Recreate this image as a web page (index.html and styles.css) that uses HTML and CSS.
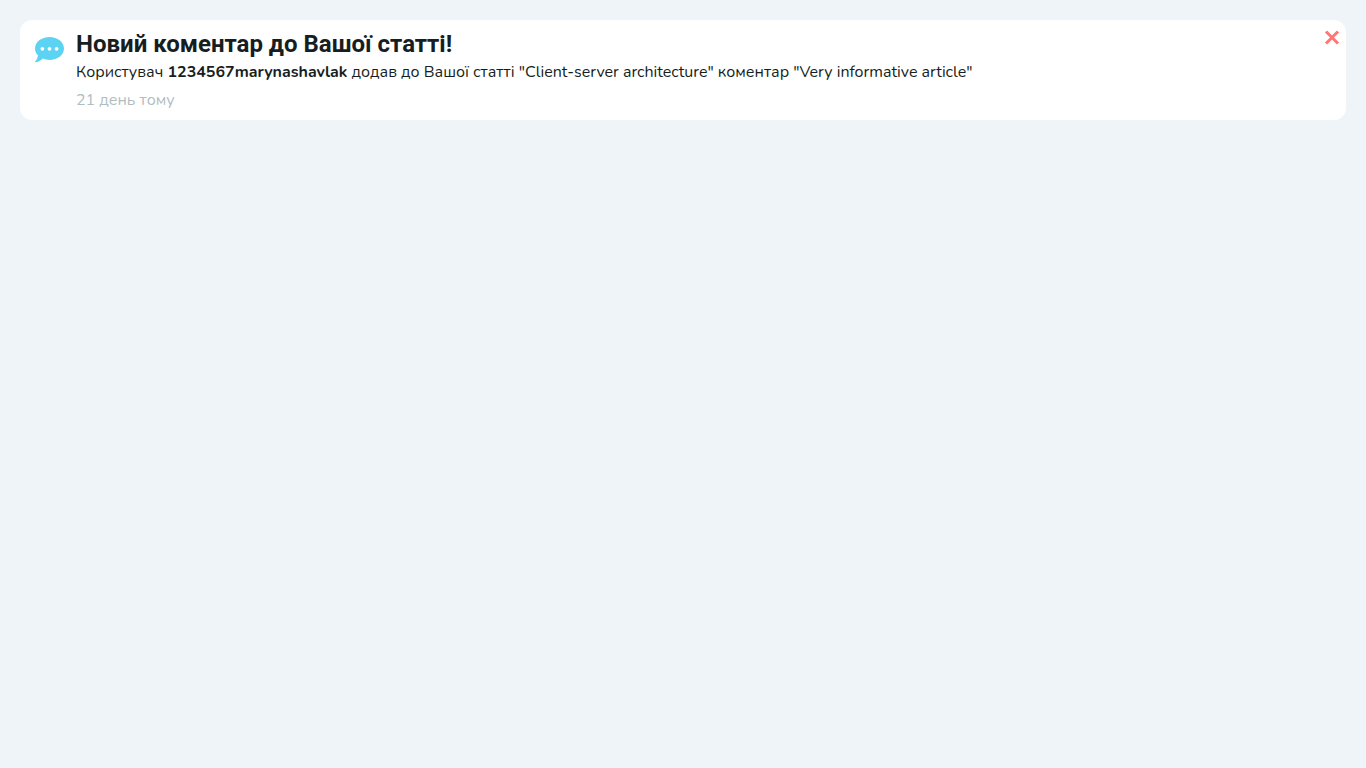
FILE: index.html
```html
<!DOCTYPE html>
<html lang="uk">
<head>
<meta charset="utf-8">
<meta name="viewport" content="width=device-width, initial-scale=1">
<title>Сповіщення</title>
<link rel="stylesheet" href="styles.css">
</head>
<body>
<main class="notifications">
  <article class="notification">
    <svg class="notification-icon" viewBox="0 0 30 26" aria-hidden="true">
      <path fill="#5dd3f3" d="M15.500 0C23.500 0 30 5 30 11.500S23.500 23 15.500 23C13 23 10.800 22.500 8.800 21.600C6.800 23.500 4.400 25.300 1.400 25.300C1 25.300 .900 24.900 1.100 24.600C2.600 23 3.500 21 4 18.500C2.100 16.500 1 14.200 1 11.500C1 5 7.500 0 15.500 0Z"/>
      <circle cx="8.400" cy="11.800" r="1.900" fill="#fff"/>
      <circle cx="15.500" cy="11.800" r="1.900" fill="#fff"/>
      <circle cx="22.600" cy="11.800" r="1.900" fill="#fff"/>
    </svg>
    <div class="notification-body">
      <h1 class="notification-title">Новий коментар до Вашої статті!</h1>
      <p class="notification-text">Користувач <b>1234567marynashavlak</b> додав до Вашої статті "Client-server architecture" коментар "Very informative article"</p>
      <time class="notification-time">21 день тому</time>
    </div>
    <button class="notification-close" type="button" aria-label="Закрити">
      <svg class="close-icon" viewBox="0 0 15 15" aria-hidden="true">
        <path d="M1.500 1.500L13.500 13.500M13.500 1.500L1.500 13.500" fill="none" stroke="#ff7676" stroke-width="3"/>
      </svg>
    </button>
  </article>
</main>
</body>
</html>
```
FILE: styles.css
```css
body {
  margin: 0;
  min-height: 100vh;
  background: #eef4f7;
  color: #161e21;
  font-family: Nunito, "Lato", "Noto Sans", sans-serif;
  font-size: 16px;
  line-height: 28px;
}

.notifications {
  padding: 20px;
}

.notification {
  display: flex;
  align-items: flex-start;
  gap: 12px;
  padding: 10px 6px 6px 14px;
  border-radius: 12px;
  background: #fff;
}

.notification-icon {
  flex: none;
  width: 30px;
  height: 26px;
  margin-top: 7px;
}

.notification-body {
  flex: 1;
  min-width: 0;
}

.notification-title {
  margin: 0;
  font-family: Roboto, sans-serif;
  font-size: 24px;
  font-weight: 700;
  line-height: 28px;
}

.notification-text {
  margin: 0;
}

.notification-time {
  display: block;
  color: #b0bec1;
}

.notification-close {
  display: flex;
  padding: 0;
  border: 0;
  background: none;
  cursor: pointer;
}

.close-icon {
  width: 16px;
  height: 15px;
}
```
